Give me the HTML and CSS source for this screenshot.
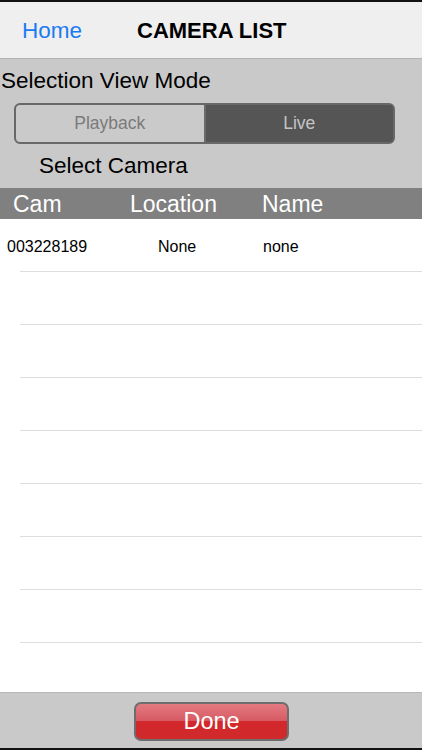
FILE: index.html
```html
<!DOCTYPE html>
<html lang="en">
<head>
<meta charset="utf-8">
<title>Camera List</title>
<link rel="stylesheet" href="styles.css">
</head>
<body>
<div class="screen">
  <div class="edge"></div>
  <header class="navbar">
    <a class="nav-back">Home</a>
    <h1 class="nav-title">CAMERA LIST</h1>
  </header>

  <section class="controls">
    <div class="label mode-label">Selection View Mode</div>
    <div class="segmented">
      <div class="seg">Playback</div>
      <div class="seg seg-active">Live</div>
    </div>
    <div class="label select-label">Select Camera</div>
  </section>

  <div class="table-head">
    <span class="col col-cam">Cam</span>
    <span class="col col-loc">Location</span>
    <span class="col col-name">Name</span>
  </div>

  <div class="table-body">
    <div class="row">
      <span class="cell cell-cam">003228189</span>
      <span class="cell cell-loc">None</span>
      <span class="cell cell-name">none</span>
    </div>
    <div class="row"></div>
    <div class="row"></div>
    <div class="row"></div>
    <div class="row"></div>
    <div class="row"></div>
    <div class="row"></div>
    <div class="row"></div>
  </div>

  <footer class="toolbar">
    <button class="done-btn">Done</button>
  </footer>
  <div class="edge"></div>
</div>
</body>
</html>
```

FILE: styles.css
```css
* {
  box-sizing: border-box;
}

html, body {
  margin: 0;
  padding: 0;
  background: #000;
}

.screen {
  width: 422px;
  height: 750px;
  display: flex;
  flex-direction: column;
  font-family: "Liberation Sans", Arial, sans-serif;
  background: #c9c9c9;
  overflow: hidden;
}

.edge {
  height: 2px;
  background: #111;
  flex: none;
}

/* Navigation bar */
.navbar {
  flex: none;
  height: 57px;
  background: #efefef;
  border-bottom: 1px solid #b3b3b3;
  display: flex;
  align-items: center;
  padding: 2px 0 0 22px;
}

.nav-back {
  color: #1b7cf1;
  font-size: 22.5px;
  width: 115px;
}

.nav-title {
  margin: 0;
  font-size: 22px;
  font-weight: bold;
  color: #000;
}

/* Mode selector area */
.controls {
  flex: none;
  height: 129px;
  padding: 10px 0 9px;
  display: flex;
  flex-direction: column;
}

.label {
  font-size: 22.5px;
  line-height: 24px;
  height: 24px;
  color: #000;
}

.mode-label {
  padding-left: 1px;
}

.select-label {
  margin-top: 10px;
  padding-left: 39px;
}

.segmented {
  margin: 10px 0 0 14px;
  width: 381px;
  height: 41px;
  display: flex;
  border: 2px solid #686868;
  border-radius: 6px;
  overflow: hidden;
  background: #5a5a5a;
}

.seg {
  flex: 1;
  display: flex;
  align-items: center;
  justify-content: center;
  font-size: 17.5px;
  color: #7a7a7a;
  background: #cacaca;
}

.seg-active {
  background: #555555;
  color: #c4c4c4;
  border-left: 2px solid #6a6a6a;
}

/* Table */
.table-head {
  flex: none;
  height: 31px;
  background: #808080;
  display: flex;
  align-items: center;
  padding-top: 2px;
  color: #fff;
  font-size: 23px;
}

.col-cam { width: 130px; padding-left: 13px; }
.col-loc { width: 132px; }

.table-body {
  flex: 1;
  background: #fff;
  display: flex;
  flex-direction: column;
}

.row {
  flex: none;
  height: 53px;
  position: relative;
  display: flex;
  align-items: center;
  padding-top: 2px;
  font-size: 16px;
  color: #000;
}

.row::after {
  content: "";
  position: absolute;
  left: 20px;
  right: 0;
  bottom: 0;
  height: 1px;
  background: #dedede;
}

.cell-cam { width: 158px; padding-left: 7px; }
.cell-loc { width: 105px; }

/* Bottom toolbar */
.toolbar {
  flex: none;
  height: 56px;
  border-top: 1px solid #b8b8b8;
  background: #c9c9c9;
  display: flex;
  justify-content: center;
  padding-top: 9px;
}

.done-btn {
  width: 155px;
  height: 39px;
  margin-left: 1px;
  border: 2px solid #6d6d6d;
  border-radius: 7px;
  background: linear-gradient(#e47a82 0%, #d65a63 48%, #d2272b 50%, #d02a2c 100%);
  color: #fff;
  font-family: "Liberation Sans", Arial, sans-serif;
  font-size: 23.5px;
  padding: 0;
}
```
